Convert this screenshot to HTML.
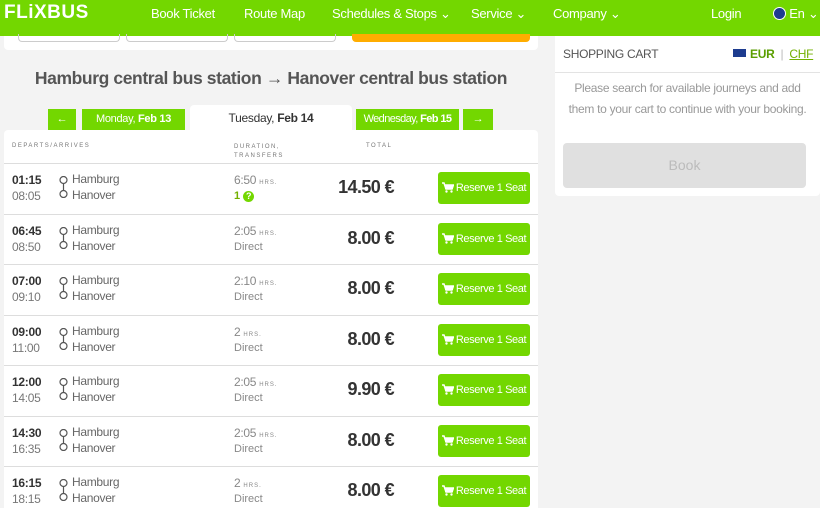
<!DOCTYPE html>
<html><head><meta charset="utf-8"><style>
*{box-sizing:border-box;margin:0;padding:0}
html,body{width:820px;height:508px;overflow:hidden}
body{background:#f3f3f3;font-family:"Liberation Sans",sans-serif;color:#444;position:relative;white-space:nowrap}
.hdr{position:absolute;left:0;top:0;width:820px;height:36px;background:#73d700;color:#fff;font-size:13px;letter-spacing:-0.3px}
.hdr span{position:absolute;top:6px}
.logo{font-weight:bold;font-size:19px;left:4px;top:2px!important;letter-spacing:0.5px!important}
.card{position:absolute;background:#fff;border-radius:4px}
.abs{position:absolute}
.row{position:absolute;left:4px;width:534px;height:51px;border-top:1px solid #ddd;background:#fff}
.t1{position:absolute;left:8px;top:9px;font-weight:bold;font-size:12px;color:#333;letter-spacing:-0.3px}
.t2{position:absolute;left:8px;top:25px;font-size:12px;color:#777;letter-spacing:-0.3px}
.c1{position:absolute;left:68px;top:8px;font-size:12px;color:#666;letter-spacing:-0.3px}
.c2{position:absolute;left:68px;top:24px;font-size:12px;color:#666;letter-spacing:-0.3px}
.ic{position:absolute;left:55px;top:12px;width:9px;height:22px}
.d1{position:absolute;left:230px;top:9px;font-size:12px;color:#888;letter-spacing:-0.3px}
.d1 small{font-size:6px;letter-spacing:1px}
.d2{position:absolute;left:230px;top:26px;font-size:11px;color:#888}
.pr{position:absolute;right:144px;top:13px;font-size:18px;font-weight:bold;color:#333;letter-spacing:-0.6px}
.btn{position:absolute;left:434px;top:8px;width:92px;height:32px;background:#73d700;border-radius:3px;color:#fff;font-size:11px;letter-spacing:-0.4px;text-align:center;line-height:32px}
.btn svg{vertical-align:-2px;margin-right:2px}
.tab{position:absolute;top:109px;height:21px;background:#73d700;color:#fff;font-size:11px;letter-spacing:-0.3px;text-align:center;line-height:21px}
</style></head><body>
<div class="hdr">
<span class="logo">FLiXBUS</span>
<span style="left:151px">Book Ticket</span>
<span style="left:244px">Route Map</span>
<span style="left:332px">Schedules &amp; Stops ⌄</span>
<span style="left:471px">Service ⌄</span>
<span style="left:553px">Company ⌄</span>
<span style="left:711px">Login</span>
<span style="left:773px"><b style="display:inline-block;width:13px;height:13px;border-radius:50%;background:#1d3c8f;border:1px solid #fff;vertical-align:-2px"></b> En ⌄</span>
</div>
<div class="card" style="left:4px;top:36px;width:534px;height:14px;border-radius:0 0 4px 4px"></div>
<div class="abs" style="left:18px;top:34px;width:102px;height:8px;border:1px solid #ccc;border-top:none;border-radius:0 0 4px 4px"></div>
<div class="abs" style="left:126px;top:34px;width:102px;height:8px;border:1px solid #ccc;border-top:none;border-radius:0 0 4px 4px"></div>
<div class="abs" style="left:234px;top:34px;width:102px;height:8px;border:1px solid #ccc;border-top:none;border-radius:0 0 4px 4px"></div>
<div class="abs" style="left:352px;top:34px;width:178px;height:8px;background:#ffad00;border-radius:0 0 4px 4px"></div>
<div class="abs" style="left:0;width:542px;top:68px;text-align:center;font-size:17.5px;letter-spacing:-0.4px;font-weight:bold;color:#555">Hamburg central bus station → Hanover central bus station</div>
<div class="tab" style="left:48px;width:28px">←</div>
<div class="tab" style="left:82px;width:103px">Monday, <b>Feb 13</b></div>
<div class="abs" style="left:190px;top:105px;width:162px;height:26px;background:#fff;border-radius:4px 4px 0 0;text-align:center;line-height:26px;font-size:12px;letter-spacing:-0.3px;color:#333">Tuesday, <b>Feb 14</b></div>
<div class="tab" style="left:356px;width:103px;letter-spacing:-0.6px">Wednesday, <b>Feb 15</b></div>
<div class="tab" style="left:463px;width:30px">→</div>
<div class="card" style="left:4px;top:130px;width:534px;height:34px;border-radius:4px 4px 0 0"></div>
<div class="abs" style="left:12px;top:143px;font-size:6px;letter-spacing:1.5px;color:#777">DEPARTS/ARRIVES</div>
<div class="abs" style="left:234px;top:143px;font-size:6px;letter-spacing:1.5px;color:#777;line-height:9px">DURATION,<br>TRANSFERS</div>
<div class="abs" style="left:366px;top:143px;font-size:6px;letter-spacing:1.5px;color:#777">TOTAL</div>
<svg width="0" height="0" style="position:absolute"><defs><g id="r"><circle cx="4.5" cy="4" r="3.5" fill="none" stroke="#555" stroke-width="1.2"/><line x1="4.5" y1="7.5" x2="4.5" y2="14.5" stroke="#555" stroke-width="1.2"/><circle cx="4.5" cy="18" r="3.5" fill="none" stroke="#555" stroke-width="1.2"/></g>
<g id="cart"><path d="M0 1h2l2 6h6l1.5-4H3" fill="none" stroke="#fff" stroke-width="1.5"/><rect x="3" y="3" width="8" height="4" fill="#fff"/><circle cx="4.5" cy="9.5" r="1.2" fill="#fff"/><circle cx="9.5" cy="9.5" r="1.2" fill="#fff"/></g></defs></svg>
<div class="row" style="top:163px"><div class="t1">01:15</div><div class="t2">08:05</div><svg class="ic"><use href="#r"/></svg><div class="c1">Hamburg</div><div class="c2">Hanover</div><div class="d1">6:50 <small>HRS.</small></div><div class="d2" style="font-weight:bold;color:#73b000">1 <b style="display:inline-block;width:11px;height:11px;border-radius:50%;background:#73d700;color:#fff;font-size:9px;text-align:center;line-height:11px">?</b></div><div class="pr">14.50 €</div><div class="btn"><svg width="12" height="11"><use href="#cart"/></svg>Reserve 1 Seat</div></div>
<div class="row" style="top:214px"><div class="t1">06:45</div><div class="t2">08:50</div><svg class="ic"><use href="#r"/></svg><div class="c1">Hamburg</div><div class="c2">Hanover</div><div class="d1">2:05 <small>HRS.</small></div><div class="d2">Direct</div><div class="pr">8.00 €</div><div class="btn"><svg width="12" height="11"><use href="#cart"/></svg>Reserve 1 Seat</div></div>
<div class="row" style="top:264px"><div class="t1">07:00</div><div class="t2">09:10</div><svg class="ic"><use href="#r"/></svg><div class="c1">Hamburg</div><div class="c2">Hanover</div><div class="d1">2:10 <small>HRS.</small></div><div class="d2">Direct</div><div class="pr">8.00 €</div><div class="btn"><svg width="12" height="11"><use href="#cart"/></svg>Reserve 1 Seat</div></div>
<div class="row" style="top:315px"><div class="t1">09:00</div><div class="t2">11:00</div><svg class="ic"><use href="#r"/></svg><div class="c1">Hamburg</div><div class="c2">Hanover</div><div class="d1">2 <small>HRS.</small></div><div class="d2">Direct</div><div class="pr">8.00 €</div><div class="btn"><svg width="12" height="11"><use href="#cart"/></svg>Reserve 1 Seat</div></div>
<div class="row" style="top:365px"><div class="t1">12:00</div><div class="t2">14:05</div><svg class="ic"><use href="#r"/></svg><div class="c1">Hamburg</div><div class="c2">Hanover</div><div class="d1">2:05 <small>HRS.</small></div><div class="d2">Direct</div><div class="pr">9.90 €</div><div class="btn"><svg width="12" height="11"><use href="#cart"/></svg>Reserve 1 Seat</div></div>
<div class="row" style="top:416px"><div class="t1">14:30</div><div class="t2">16:35</div><svg class="ic"><use href="#r"/></svg><div class="c1">Hamburg</div><div class="c2">Hanover</div><div class="d1">2:05 <small>HRS.</small></div><div class="d2">Direct</div><div class="pr">8.00 €</div><div class="btn"><svg width="12" height="11"><use href="#cart"/></svg>Reserve 1 Seat</div></div>
<div class="row" style="top:466px"><div class="t1">16:15</div><div class="t2">18:15</div><svg class="ic"><use href="#r"/></svg><div class="c1">Hamburg</div><div class="c2">Hanover</div><div class="d1">2 <small>HRS.</small></div><div class="d2">Direct</div><div class="pr">8.00 €</div><div class="btn"><svg width="12" height="11"><use href="#cart"/></svg>Reserve 1 Seat</div></div>
<div class="card" style="left:555px;top:36px;width:265px;height:160px;border-radius:0 0 4px 4px"></div>
<div class="abs" style="left:555px;top:72px;width:265px;border-top:1px solid #e3e3e3"></div>
<div class="abs" style="left:563px;top:47px;font-size:12px;color:#555;letter-spacing:-0.3px">SHOPPING CART</div>
<div class="abs" style="left:733px;top:49px;width:13px;height:8px;background:#1d3c8f"></div>
<div class="abs" style="left:750px;top:47px;font-size:12px;color:#5a9e00;font-weight:bold;letter-spacing:-0.3px">EUR <span style="color:#bbb;font-weight:normal">&nbsp;|&nbsp;</span> <span style="font-weight:normal;text-decoration:underline;color:#73b000">CHF</span></div>
<div class="abs" style="left:555px;top:78px;width:265px;text-align:center;font-size:12px;letter-spacing:-0.3px;line-height:21px;color:#999;white-space:normal">Please search for available journeys and add<br>them to your cart to continue with your booking.</div>
<div class="abs" style="left:563px;top:143px;width:243px;height:45px;background:#e0e0e0;border-radius:4px;text-align:center;line-height:45px;color:#bbb;font-size:14px">Book</div>
</body></html>
